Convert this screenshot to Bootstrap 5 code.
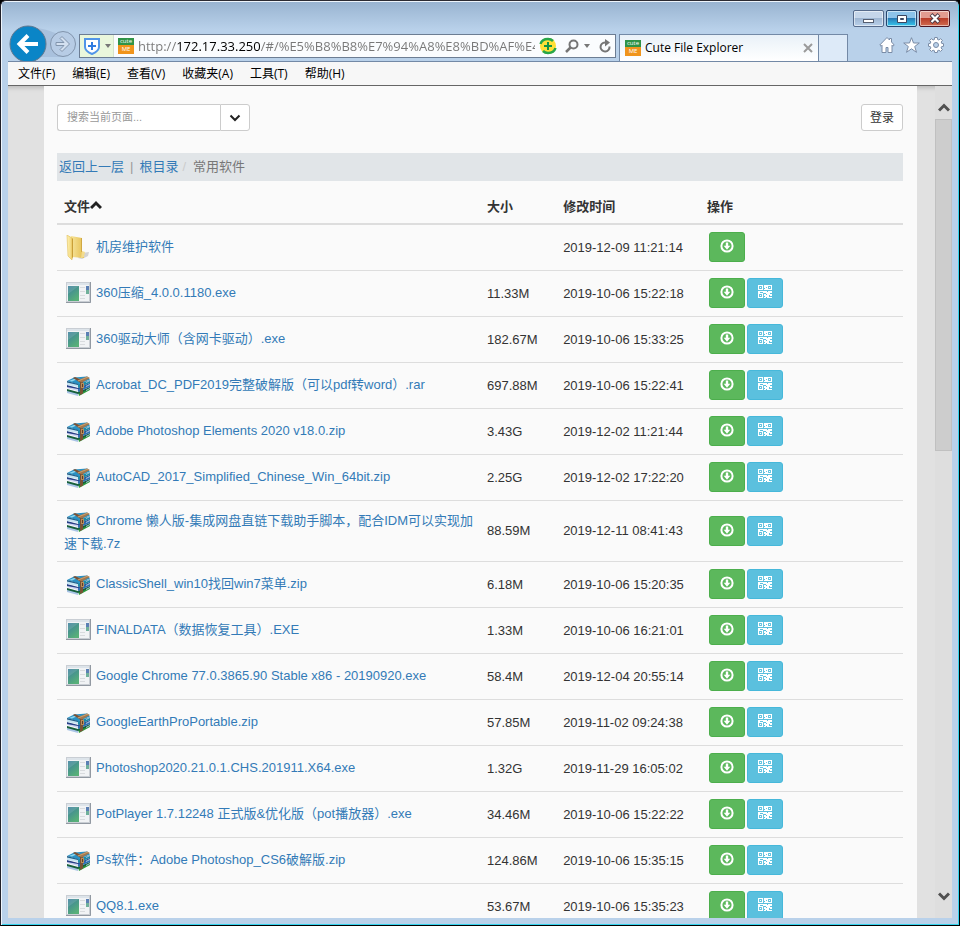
<!DOCTYPE html>
<html lang="zh-CN">
<head>
<meta charset="utf-8">
<meta name="viewport" content="width=device-width, initial-scale=1">
<title>Cute File Explorer</title>
<link rel="stylesheet" href="https://cdn.jsdelivr.net/npm/bootstrap@5.3.0/dist/css/bootstrap.min.css">
<style>
  :root { --ui: "Open Sans", "Noto Sans CJK SC", sans-serif; --page: "Liberation Sans", "Noto Sans CJK SC", sans-serif; --edge: #7389a6; }
  body { background: #000; font-family: var(--page); font-size: 13px; line-height: 18px; color: #333; }
  button { padding: 0; border: 0; background: none; }
  svg { display: block; flex: none; }
  .ie-window { height: 100vh; margin: 0; border: 1px solid #2c2b33; border-color: #2c2b33 #000 #000 #20202a; border-radius: 6px 6px 0 0; background: #b9d1ea; box-shadow: inset 1px 1px 0 #eef5fc, inset -1px -1px 0 #35d4ee; padding: 0 7px 7px; overflow: hidden; }
  .ie-top { background: linear-gradient(#99b4d1, #b9d1ea 28px); margin: 1px -6px 0; padding: 8px 8px 0 7px; }
  .win-btn { width: 31px; height: 17px; border: 1px solid #566b8b; border-radius: 2px; display: grid; place-items: center; background: linear-gradient(#c5d6ea 48%, #9fb7d3 50%, #b9d0ea); box-shadow: inset 0 0 0 1px #ffffff88; }
  .win-max { background: linear-gradient(#8dc3ea 45%, #2878b4 48%, #35c8ee); border-color: #26466e; }
  .win-close { background: linear-gradient(#e39c90 45%, #b93c28 48%, #d06b50); border-color: #4c1420; }
  .nav-row { height: 27px; margin-top: 7px; }
  .back-btn { margin-top: -9px; width: 68px; }
  .address { flex: 1; max-width: 537px; height: 24px; margin-left: 2px; border: 1px solid #6c7d93; background: #fafcfe; }
  .shield { width: 34px; height: 22px; background: #eaf7dc; border-right: 1px solid #d6e3cc; }
  .url { min-width: 0; border: 0; padding: 0; font: 13px/20px var(--ui); color: transparent; outline: 0;
    background: linear-gradient(90deg, #777 38px, #000 38px, #000 122px, #777 122px); -webkit-background-clip: text; background-clip: text; }
  .favicon text { font: 6px var(--ui); fill: #fff; text-anchor: middle; }
  .tab-active { width: 200px; margin-left: 3px; border: 1px solid var(--edge); border-bottom: 0; background: linear-gradient(#e9f1f8, #fff); font: 12px/26px var(--ui); color: #000; padding: 0 5px; }
  .tab-new { width: 29px; border: 1px solid var(--edge); border-width: 1px 1px 0 0; background: #ddeaf8; }
  .tools { padding: 3px 6px 0 0; }
  .menu-line { border-top: 1px solid var(--edge); border-bottom: 1px solid #666; background: #f7f7f7; height: 25px; padding-left: 10px; gap: 17px; font: 12px/23px var(--ui); }
  .menu-line a { color: #000; text-decoration: none; }
  .viewport { min-height: 0; background: #e1e1e1; box-shadow: inset 0 5px 4px -3px #bbb; }
  .sheet { background: #fafafa; min-width: 0; margin: 0 18px 0 36px; padding: 18px 14px 0 13px; overflow: hidden; }
  .search { width: 193px; height: 27px; }
  .search input { border: 1px solid #ccc; border-right: 0; border-radius: 3px 0 0 3px; font-size: 11px; padding: 0 9px; box-shadow: none; min-height: 0; }
  .search input::placeholder { color: #999; }
  .search button { flex: none; width: 30px; border: 1px solid #ccc; border-radius: 0 3px 3px 0; background: #fff; display: grid; place-items: center; }
  .login { height: 27px; padding: 0 8px; border: 1px solid #ccc; border-radius: 3px; background: #fff; font-size: 12px; color: #333; }
  .crumbs { margin: 22px 0 7px; padding: 0 2px; height: 28px; background: #e1e5e8; color: #777; }
  .crumbs .bar { margin: 0 6px; color: #999; }
  .crumbs .slash { margin: 0 7px 0 4px; color: #ccc; }
  .crumbs a, .files a { color: #337ab7; text-decoration: none; }
  .files { --bs-table-bg: transparent; table-layout: fixed; color: #333; border-color: #ddd; }
  .files th { padding: 8px 7px 7px; height: 36px; border-bottom: 2px solid #ddd; }
  .files td { padding: 8px 4px 8px 7px; height: 46px; vertical-align: middle; border-bottom: 1px solid #ddd; }
  .files td:last-child { padding: 7px 9px 8px; }
  .c-name { width: 50%; } .c-size { width: 9%; } .c-time { width: 17%; }
  .files .ico { display: inline-block; width: 26px; height: 26px; vertical-align: middle; margin: 0 5px 0 1px; }
  .act { width: 36px; height: 30px; border: 1px solid #4cae4c; border-radius: 3px; background: #5cb85c; color: #fff; display: grid; place-items: center; padding-bottom: 2px; }
  .act-qr { border-color: #46b8da; background: #5bc0de; }
  .scroller { flex: none; width: 17px; background: #dedede; }
  .scroller button { height: 33px; display: grid; place-items: center; padding-top: 9px; }
  .scroller .down { height: 44px; padding-top: 0; }
  .track { flex: 1; }
  .thumb { height: 44%; background: #cdcdcd; border: 1px solid #c0c0c0; }
</style>
</head>
<body>
<svg width="0" height="0" class="position-absolute" aria-hidden="true">
  <defs>
    <linearGradient id="gf" x2="1"><stop stop-color="#fff3b4"/><stop offset="1" stop-color="#f0d272"/></linearGradient>
    <linearGradient id="gb" x2="1"><stop stop-color="#f7e49a"/><stop offset="1" stop-color="#e5bf50"/></linearGradient>
    <linearGradient id="ge" x2=".6" y2="1"><stop stop-color="#3b7f9e"/><stop offset="1" stop-color="#58b078"/></linearGradient>
  </defs>
  <symbol id="folder" viewBox="0 1 26 26">
    <path d="M17 19l7-1-1 4-6 3-4-1z" fill="#999" opacity=".4"/>
    <path d="M6 2l11 2v14l2 0v6l-12-1z" fill="url(#gb)"/><path d="M16.500 4v14" stroke="#d0a844"/>
    <path d="M17 17l3 1-1 5-3 1z" fill="#f3dc8e"/><path d="M2 1l5 3v22l-4-4z" fill="url(#gf)" stroke="#e1be55" stroke-width=".6"/><path d="M7 4l1 1v18l-1 2z" fill="#c99f38"/>
  </symbol>
  <symbol id="exe" viewBox="0 2 26 26">
    <path d="M1 3h25v21H1z" fill="#c9ced4"/><path d="M2 4h22v18H2z" fill="#f1f3f5"/><path d="M2 4h22v2H2z" fill="#dde4ea"/>
    <path d="M3 7h11v15H3z" fill="url(#ge)"/><path d="M3 7h11L3 15z" fill="#fff" opacity=".12"/>
    <path d="M15 8.500h5M15 12.500h5M15 16.500h5M15 19.500h5" stroke="#d8dbde"/><path d="M21 7h3v8h-3z" fill="#6fb09a"/><path d="M21 7h3v4h-3z" fill="#5b80b4"/><path d="M25.500 3v20.500H1" fill="none" stroke="#9299a2"/>
  </symbol>
  <symbol id="rar" viewBox="0 0 26 26">
    <path d="M13 19l12-4v2l-11 6z" fill="#2c9a3c"/><path d="M2 17l11 3v3L2 20z" fill="#a9c4e6"/><path d="M2 16l11 3 12-5v2l-12 5-11-3z" fill="#17603c"/>
    <path d="M13 15l12-4v3l-12 5z" fill="#2f6fb4"/><path d="M2 13l11 2v3L2 15z" fill="#ccd3f0"/><path d="M2 12l11 3 12-5v1l-12 5-11-2z" fill="#273f86"/>
    <path d="M13 11l12-4v3l-12 5z" fill="#1d8aa8"/><path d="M2 9l11 2v3L2 12z" fill="#c6e4f2"/>
    <path d="M9 4.500l13-1 3 3-12 5L2 8z" fill="#2a91c3"/><path d="M10 5.500l5-.5-8 3.500-3-.5z" fill="#8ed6ee"/>
    <path d="M2 8l11 3v1L2 9.500z" fill="#215c85"/>
    <path d="M8 5l2-1 8 3.500v13l-3 1.500V9.500z" fill="#7a5236"/><path d="M12 7.500l10-4 3 1.500-8 4.500z" fill="#a3774d"/><path d="M13 8l10-4" stroke="#c9a070"/>
    <path d="M16 10h3v5h-3z" fill="#b88d5b"/><path d="M17.500 11v3" stroke="#5e4028"/><path d="M21 9.500l4-2M21 13.500l4-2M21 17.500l4-2" stroke="#a8c4da"/>
  </symbol>
  <symbol id="dl" viewBox="0 0 14 14">
    <circle cx="7" cy="7" r="5.600" fill="none" stroke="currentColor" stroke-width="2"/><path d="M5.800 3.500h2.400v3.200h2.100L7 10.700 3.700 6.700h2.100z" fill="currentColor"/>
  </symbol>
  <symbol id="qr" viewBox="0 0 14 14">
    <path d="M.5.500h4v4h-4zM.5 8.500h4v4h-4zM9.500.500h4v4h-4z" fill="none" stroke="currentColor" stroke-width="1.200"/>
    <path d="M2 2h1v1H2zM11 2h1v1h-1zM2 10h1v1H2zM6 0h3v2H8v1h1v2H6V4h1V3H6zM0 6h5v1H2v1H0zM5 6h4v1h1V6h4v2h-2v1h2v2h-2v-1h-1v2h3v1H9v-1H8v1H6v-1h1v-1H6V9h2V8H5zM8 9v1h1V9z" fill="currentColor" fill-rule="evenodd"/>
  </symbol>
</svg>

<div class="ie-window d-flex flex-column">
  <header class="ie-top">
    <div class="d-flex justify-content-end" style="gap:2px">
      <button class="win-btn" aria-label="最小化"><svg width="13" height="12"><rect x="1.500" y="6.500" width="10" height="3" fill="#fff" stroke="#555e70"/></svg></button>
      <button class="win-btn win-max" aria-label="最大化"><svg width="12" height="10"><path d="M1.500 1.500h9v7h-9z" fill="#fff" stroke="#3a4660"/><path d="M4.500 4.500h3v1h-3z" fill="#2878b4" stroke="#3a4660"/></svg></button>
      <button class="win-btn win-close" aria-label="关闭"><svg width="12" height="11"><path d="M2 1.500l8 8M10 1.500l-8 8" stroke="#4d3944" stroke-width="4"/><path d="M2.500 2l7 7M9.500 2l-7 7" stroke="#fff" stroke-width="2.200"/></svg></button>
    </div>
    <div class="nav-row d-flex">
      <button class="back-btn d-flex" aria-label="后退和前进"><svg width="68" height="36" viewBox="0 0 68 36">
        <path d="M22 2q16 2 24 6l8 0v24H22z" fill="#9db5d2" opacity=".55"/>
        <circle cx="19" cy="19" r="18" fill="#0a85c7" stroke="#62788f"/>
        <path d="M29 19H10M19 10.500l-8.500 8.500 8.500 8.500" fill="none" stroke="#fff" stroke-width="4"/>
        <circle cx="54" cy="19" r="12.500" fill="#b7cce5" stroke="#8194ac"/>
        <path d="M47 17.500h8l-4-4 2-2 7.500 7.500-7.500 7.500-2-2 4-4h-8z" fill="#d3e0f0" stroke="#8194ac"/></svg></button>
      <div class="address d-flex align-items-center">
        <button class="shield d-flex align-items-center justify-content-center gap-1" aria-label="安全"><svg width="18" height="18" viewBox="0 0 18 18"><path d="M2 2h14v8q0 4-7 7-7-3-7-7z" fill="#fff" stroke="#5195e8" stroke-width="2"/><path d="M9 5v8M5 9h8" stroke="#2f7be0" stroke-width="2"/></svg><svg width="6" height="4"><path d="M0 0h6L3 4z" fill="#777"/></svg></button>
        <svg class="favicon ms-1 me-1" width="16" height="16"><path d="M0 0h16v7H0z" fill="#2f9347"/><path d="M0 7h16v9H0z" fill="#f0941c"/><text x="8" y="5">cute</text><text x="8" y="13">ME</text></svg>
        <input class="url flex-grow-1" aria-label="地址" value="http://172.17.33.250/#/%E5%B8%B8%E7%94%A8%E8%BD%AF%E4%BB%B6">
        <button class="ms-1" aria-label="兼容模式"><svg width="18" height="18" viewBox="0 0 18 18"><circle cx="9" cy="9" r="8" fill="#ffe037"/><path d="M1.500 7Q3 2 9 2q3 0 5 2M16.500 11Q15 16 9 16q-3 0-5-2" fill="none" stroke="#28a648" stroke-width="2.500"/><path d="M9 5v8M5 9h8" stroke="#129447" stroke-width="2"/></svg></button>
        <button class="ms-2" aria-label="搜索"><svg width="14" height="14"><circle cx="8.500" cy="5.500" r="4" fill="none" stroke="#767676" stroke-width="2"/><path d="M5.500 8.500L1 13" stroke="#767676" stroke-width="2.500"/></svg></button>
        <button class="ms-1" aria-label="展开"><svg width="8" height="5"><path d="M1 0h6L4 4z" fill="#777"/></svg></button>
        <button class="ms-2 me-1" aria-label="刷新"><svg width="12" height="14"><path d="M10.500 7.500A4.500 4.500 0 1 1 6 3.500h2" fill="none" stroke="#767676" stroke-width="2"/><path d="M6 0l5 3.500-5 4z" fill="#767676"/></svg></button>
      </div>
      <div class="tab-active d-flex align-items-center"><svg class="favicon" width="16" height="16"><path d="M0 0h16v7H0z" fill="#2f9347"/><path d="M0 7h16v9H0z" fill="#f0941c"/><text x="8" y="5">cute</text><text x="8" y="13">ME</text></svg><span class="flex-grow-1 ms-1">Cute File Explorer</span><button aria-label="关闭标签页"><svg width="10" height="10"><path d="M1 1l8 8M9 1L1 9" stroke="#9a9a9a" stroke-width="2"/></svg></button></div>
      <button class="tab-new" aria-label="新建标签页"></button>
      <div class="tools d-flex align-items-start gap-2 ms-auto">
        <button aria-label="主页"><svg width="16" height="16" viewBox="0 0 16 16"><path d="M8 .5L.8 8 2 9.200l1-1V15.500h4v-5h2v5h4V8.200l1 1L15.200 8 12.500 5V1.500h-2V3z" fill="#fff" stroke="#7a8ca6"/></svg></button>
        <button aria-label="收藏"><svg width="17" height="16" viewBox="0 0 17 16"><path d="M8.500.7l2 5.300h5.800l-4.600 3.500 1.800 5.800-5-3.500-5 3.500 1.800-5.800L.7 6h5.800z" fill="#fff" stroke="#7a8ca6"/></svg></button>
        <button aria-label="工具"><svg width="16" height="16" viewBox="0 0 16 16"><path d="M6.700.5h2.600l.3 2 1.300.5 1.700-1.300 1.800 1.800L13.200 5l.5 1.400 1.800.3v2.600l-1.900.3-.5 1.300 1.300 1.700-1.800 1.800-1.700-1.200-1.300.5-.3 1.800H6.700l-.3-1.800-1.300-.5-1.700 1.200-1.800-1.800 1.200-1.700-.5-1.300-1.800-.3V6.700l1.800-.3L2.800 5 1.600 3.500l1.800-1.800L5.100 3l1.300-.5z" fill="#fff" stroke="#7a8ca6"/><circle cx="8" cy="8" r="2.500" fill="#b9d1ea" stroke="#7a8ca6"/></svg></button>
      </div>
    </div>
  </header>
  <nav class="menu-line d-flex">
    <a href="#">文件(F)</a><a href="#">编辑(E)</a><a href="#">查看(V)</a><a href="#">收藏夹(A)</a><a href="#">工具(T)</a><a href="#">帮助(H)</a>
  </nav>
  <div class="viewport d-flex flex-grow-1">
    <main class="sheet flex-grow-1">
      <div class="d-flex justify-content-between">
        <form class="search d-flex"><input class="form-control" type="search" placeholder="搜索当前页面..." aria-label="搜索当前页面"><button type="button" aria-label="选项"><svg width="12" height="8"><path d="M1.500 1.500L6 6l4.500-4.500" fill="none" stroke="#222" stroke-width="2"/></svg></button></form>
        <button class="login">登录</button>
      </div>
      <nav class="crumbs d-flex align-items-center" aria-label="路径"><a href="#">返回上一层</a><span class="bar">|</span><a href="#">根目录</a><span class="slash">/</span><span>常用软件</span></nav>
      <table class="table files mb-0">
        <colgroup><col class="c-name"><col class="c-size"><col class="c-time"><col></colgroup>
        <thead><tr><th scope="col"><span class="d-flex align-items-center">文件<svg width="12" height="14"><path d="M1 8l5-5 5 5" fill="none" stroke="#222" stroke-width="3"/></svg></span></th><th scope="col">大小</th><th scope="col">修改时间</th><th scope="col">操作</th></tr></thead>
        <tbody id="rows"></tbody>
      </table>
    </main>
    <div class="scroller d-flex flex-column"><button aria-label="向上滚动"><svg width="12" height="9"><path d="M1 7.500l5-5 5 5" fill="none" stroke="#505050" stroke-width="3"/></svg></button><div class="track"><div class="thumb"></div></div><button class="down" aria-label="向下滚动"><svg width="12" height="9"><path d="M1 1.500l5 5 5-5" fill="none" stroke="#505050" stroke-width="3"/></svg></button></div>
  </div>
</div>
<script>
  const files = [
    ["folder", "机房维护软件", "", "2019-12-09 11:21:14"],
    ["exe", "360压缩_4.0.0.1180.exe", "11.33M", "2019-10-06 15:22:18"],
    ["exe", "360驱动大师（含网卡驱动）.exe", "182.67M", "2019-10-06 15:33:25"],
    ["rar", "Acrobat_DC_PDF2019完整破解版（可以pdf转word）.rar", "697.88M", "2019-10-06 15:22:41"],
    ["rar", "Adobe Photoshop Elements 2020 v18.0.zip", "3.43G", "2019-12-02 11:21:44"],
    ["rar", "AutoCAD_2017_Simplified_Chinese_Win_64bit.zip", "2.25G", "2019-12-02 17:22:20"],
    ["rar", "Chrome 懒人版-集成网盘直链下载助手脚本，配合IDM可以实现加速下载.7z", "88.59M", "2019-12-11 08:41:43"],
    ["rar", "ClassicShell_win10找回win7菜单.zip", "6.18M", "2019-10-06 15:20:35"],
    ["exe", "FINALDATA（数据恢复工具）.EXE", "1.33M", "2019-10-06 16:21:01"],
    ["exe", "Google Chrome 77.0.3865.90 Stable x86 - 20190920.exe", "58.4M", "2019-12-04 20:55:14"],
    ["rar", "GoogleEarthProPortable.zip", "57.85M", "2019-11-02 09:24:38"],
    ["exe", "Photoshop2020.21.0.1.CHS.201911.X64.exe", "1.32G", "2019-11-29 16:05:02"],
    ["exe", "PotPlayer 1.7.12248 正式版&amp;优化版（pot播放器）.exe", "34.46M", "2019-10-06 15:22:22"],
    ["rar", "Ps软件：Adobe Photoshop_CS6破解版.zip", "124.86M", "2019-10-06 15:35:15"],
    ["exe", "QQ8.1.exe", "53.67M", "2019-10-06 15:35:23"]
  ];
  const button = (cls, icon, label) => `<button class="act ${cls}" aria-label="${label}"><svg width="14" height="14"><use href="#${icon}"/></svg></button>`;
  document.getElementById("rows").innerHTML = files.map(([icon, name, size, time]) =>
    `<tr><td><svg class="ico"><use href="#${icon}"/></svg><a href="#">${name}</a></td><td>${size}</td><td>${time}</td>
     <td><div class="d-flex" style="gap:2px">${button("", "dl", "下载")}${icon === "folder" ? "" : button("act-qr", "qr", "二维码")}</div></td></tr>`).join("");
</script>
<script src="https://cdn.jsdelivr.net/npm/bootstrap@5.3.0/dist/js/bootstrap.bundle.min.js"></script>
</body>
</html>
